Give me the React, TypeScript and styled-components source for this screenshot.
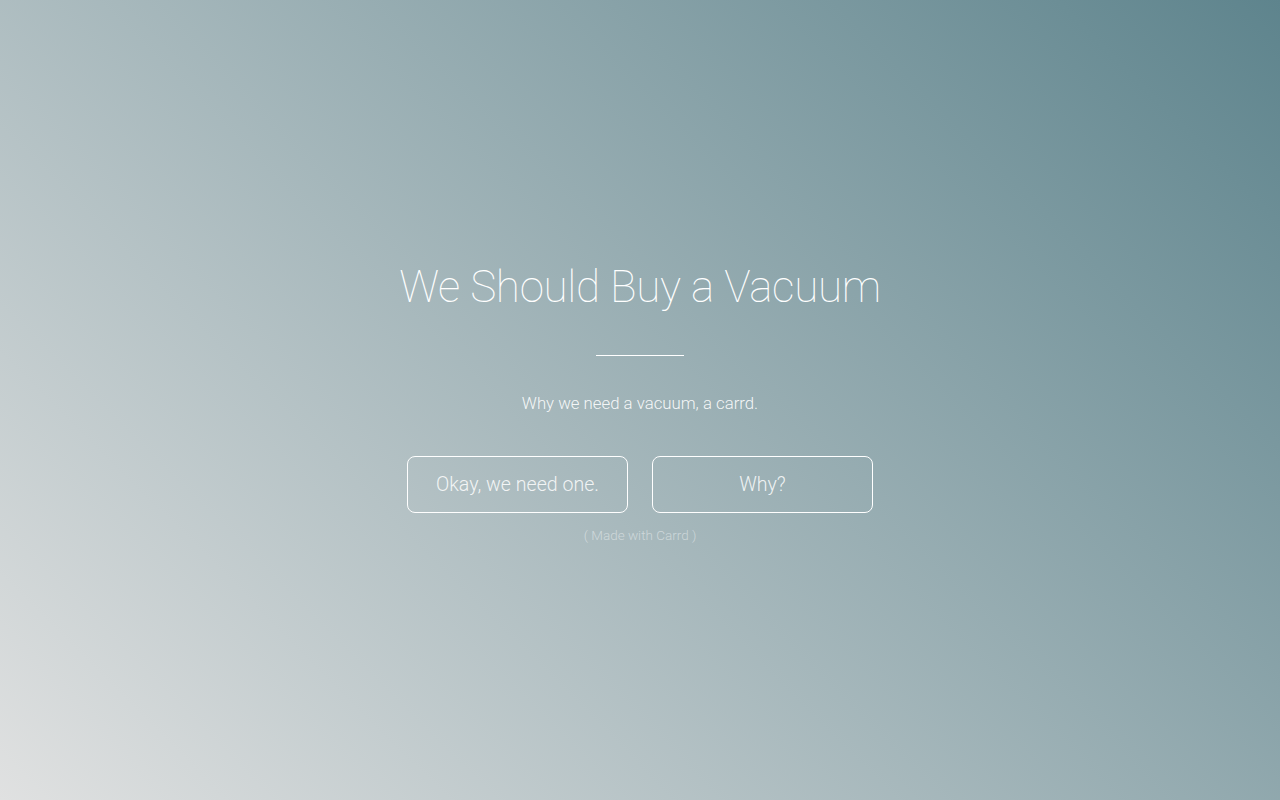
import React from "react";
import styled, { createGlobalStyle } from "styled-components";

const Global = createGlobalStyle`
  html, body { margin: 0; padding: 0; height: 100%; }
  body {
    font-family: Roboto, "Liberation Sans", sans-serif;
    background: linear-gradient(45deg, #e0e1e1 0%, #5e848d 100%);
    min-height: 100vh;
  }
  #root { min-height: 100vh; }
`;

const Page = styled.main`
  min-height: 100vh;
  display: flex;
  flex-direction: column;
  align-items: center;
  justify-content: center;
  box-sizing: border-box;
  padding-top: 6px;
  color: #fff;
`;

const Title = styled.h1`
  margin: 0;
  font-family: Roboto, "Liberation Sans", sans-serif;
  font-weight: 100;
  font-size: 44px;
  line-height: 1.2;
  letter-spacing: -0.3px;
  color: #fff;
`;

const Divider = styled.hr`
  width: 88px;
  height: 0;
  border: 0;
  border-top: 1px solid #fff;
  margin: 41px 0 0;
`;

const Subtitle = styled.p`
  margin: 35px 0 0;
  font-weight: 300;
  font-size: 16.8px;
  line-height: 1.5;
  color: rgba(255, 255, 255, 0.9);
`;

const Buttons = styled.div`
  display: flex;
  gap: 24px;
  margin-top: 40px;
`;

const Button = styled.a`
  display: flex;
  align-items: center;
  justify-content: center;
  box-sizing: border-box;
  width: 221px;
  height: 57px;
  border: 1px solid #fff;
  border-radius: 8px;
  font-weight: 300;
  font-size: 19.6px;
  color: rgba(255, 255, 255, 0.85);
  text-decoration: none;
`;

const Credit = styled.p`
  margin: 12px 0 0;
  font-weight: 300;
  font-size: 13.5px;
  line-height: 1.5;
  color: rgba(255, 255, 255, 0.45);
`;

export default function App() {
  return (
    <>
      <Global />
      <Page>
        <Title>We Should Buy a Vacuum</Title>
        <Divider />
        <Subtitle>Why we need a vacuum, a carrd.</Subtitle>
        <Buttons>
          <Button href="#">Okay, we need one.</Button>
          <Button href="#">Why?</Button>
        </Buttons>
        <Credit>( Made with Carrd )</Credit>
      </Page>
    </>
  );
}
